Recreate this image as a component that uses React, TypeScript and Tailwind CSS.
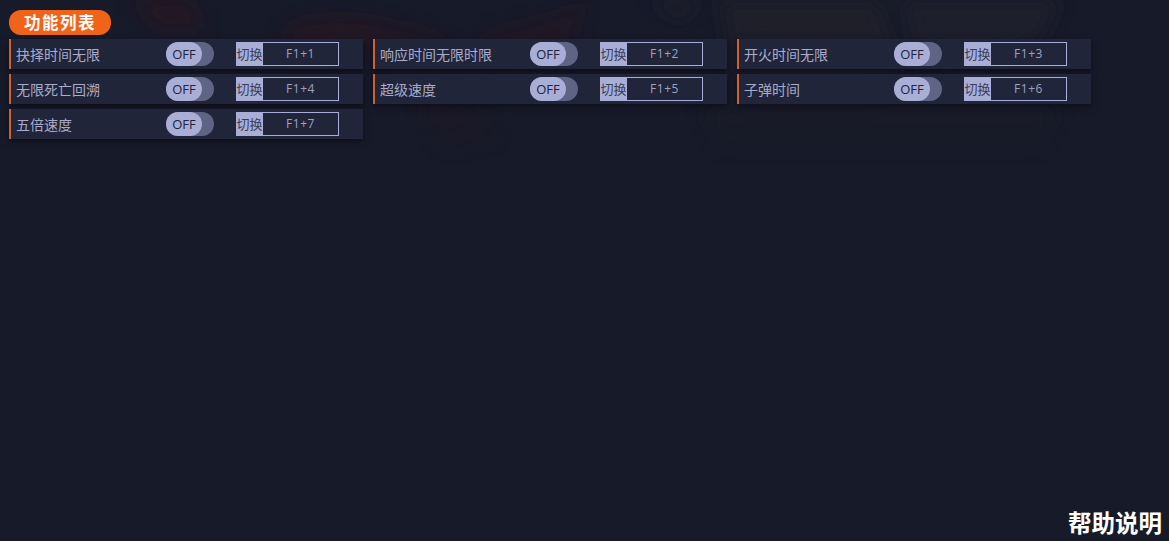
const FEATURES = [
  { name: "抉择时间无限", key: "F1+1" },
  { name: "响应时间无限时限", key: "F1+2" },
  { name: "开火时间无限", key: "F1+3" },
  { name: "无限死亡回溯", key: "F1+4" },
  { name: "超级速度", key: "F1+5" },
  { name: "子弹时间", key: "F1+6" },
  { name: "五倍速度", key: "F1+7" },
];

const FONT = "font-['Noto_Sans_CJK_SC','Noto_Sans',sans-serif]";

// faint poster art sitting behind the list
function Backdrop() {
  return (
    <svg className="absolute left-0 top-0 h-[200px] w-[1169px]" viewBox="0 0 1169 200" fill="none">
      <defs>
        <filter id="soft">
          <feGaussianBlur stdDeviation="9" />
        </filter>
        <linearGradient id="fade" x1="0" y1="0" x2="0" y2="1">
          <stop offset="0" stopColor="#fff" />
          <stop offset="0.6" stopColor="#fff" stopOpacity="0.5" />
          <stop offset="1" stopColor="#fff" stopOpacity="0" />
        </linearGradient>
        <mask id="fadeMask">
          <rect width="1169" height="200" fill="url(#fade)" />
        </mask>
      </defs>
      <g filter="url(#soft)" mask="url(#fadeMask)" opacity="0.7">
        <path d="M130 0 L190 0 L205 30 L160 30 Z" fill="#2a1620" />
        <path d="M280 30 C320 10 380 15 420 35 L410 75 L350 45 L300 60 Z" fill="#2a1620" />
        <path d="M370 30 C400 20 430 30 450 45 L440 120 L425 130 L420 60 Z" fill="#281620" />
        <path d="M480 35 L560 15 L585 0 L570 50 L510 90 Z" fill="#271620" />
        <path d="M430 110 L470 100 L500 140 L440 150 Z" fill="#241722" />
        <path d="M650 0 L700 0 L680 20 Z" fill="#23242e" />
        <path d="M720 0 L880 0 L900 60 L860 130 L760 140 L730 60 Z" fill="#22222c" />
        <path d="M900 0 L1060 0 L1040 40 L960 70 L910 40 Z" fill="#23232d" />
        <path d="M700 105 L1060 105 L1040 150 L720 150 Z" fill="#1f1c26" />
      </g>
    </svg>
  );
}

function FeatureRow({ name, hotkey }: { name: string; hotkey: string }) {
  return (
    <div className="flex h-[30px] items-center border-l-2 border-[#d0602c] bg-[#212539] shadow-[0_3px_6px_rgba(8,9,16,0.6)]">
      <span className="ml-[5px] w-[150px] text-[14px] leading-none text-[#a8acca]">{name}</span>
      <div className="h-6 w-12 rounded-full bg-[#5f6384]">
        <div className="flex h-6 w-9 items-center justify-center rounded-full bg-[#a9aed6] pt-[2px] font-['Open_Sans',sans-serif] text-[13px] text-[#21243a]">
          OFF
        </div>
      </div>
      <div className="ml-[22px] flex h-6 w-[103px]">
        <span className="flex w-[27px] shrink-0 items-center justify-center whitespace-nowrap bg-[#a9aed6] text-[13px] text-[#3a3d58]">切换</span>
        <span className="-ml-px flex flex-1 items-center justify-center border border-[#a9aed6] font-['Open_Sans',sans-serif] text-[12px] tracking-[0.6px] text-[#9fa3c2]">
          {hotkey}
        </span>
      </div>
    </div>
  );
}

export default function App() {
  return (
    <div className={`relative flex h-[541px] w-[1169px] flex-col overflow-hidden bg-[#171a29] ${FONT}`}>
      <Backdrop />
      <div className="relative flex-1 pl-[9px] pt-[10px]">
        <div className="flex h-[25px] w-[102px] items-center justify-center rounded-[12px] bg-[#f0641a] text-[16.5px] font-bold leading-none tracking-[1.5px] text-white">
          功能列表
        </div>
        <div className="mt-1 grid w-[1082px] grid-cols-[354px_354px_354px] gap-x-[10px] gap-y-[5px]">
          {FEATURES.map((f) => (
            <FeatureRow key={f.key} name={f.name} hotkey={f.key} />
          ))}
        </div>
      </div>
      <div className="relative flex justify-end pb-[4px] pr-[7px] text-[23.5px] font-bold leading-[30px] text-white">
        帮助说明
      </div>
    </div>
  );
}
